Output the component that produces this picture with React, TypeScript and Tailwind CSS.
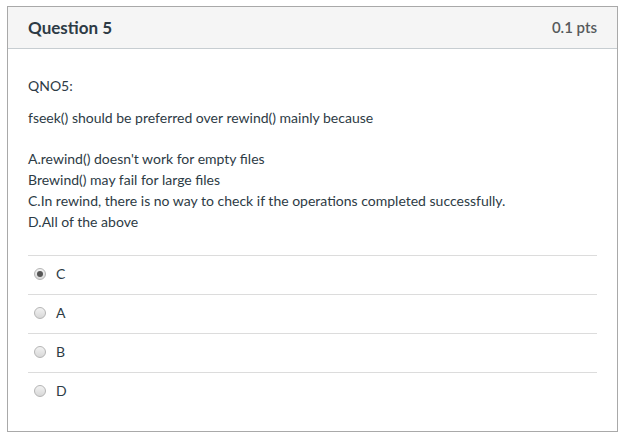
const options = [
  { label: 'C', checked: true },
  { label: 'A', checked: false },
  { label: 'B', checked: false },
  { label: 'D', checked: false },
];

const Radio = ({ checked }: { checked: boolean }) => (
  <span className="w-[12px] h-[12px] rounded-full border border-[#b5b5b5] bg-gradient-to-b from-[#f2f2f2] to-[#d8d8d8] flex items-center justify-center">
    {checked && <span className="w-[6px] h-[6px] rounded-full bg-[#555]"></span>}
  </span>
);

export default function App() {
  return (
    <div className="w-[623px] h-[437px] bg-white pt-[6px] pl-[7px]" style={{ fontFamily: 'Lato, "Open Sans", sans-serif' }}>
      <div className="w-[611px] h-[426px] border border-[#a9a9a9] text-[#2d3b45]">
        {/* Header */}
        <div className="h-[42px] bg-[#f5f5f5] border-b border-[#c7cdd1] flex items-center justify-between px-5">
          <h2 className="text-[17px] font-bold text-[#2d3b45] leading-none">Question 5</h2>
          <span className="text-[15px] font-semibold text-[#565a5c]">0.1 pts</span>
        </div>

        {/* Question text */}
        <div className="px-5 pt-[26px] text-[14px] leading-[21px]">
          <p>QNO5:</p>
          <p className="mt-[11px]">fseek() should be preferred over rewind() mainly because</p>
          <div className="mt-[20px]">
            <p>A.rewind() doesn't work for empty files</p>
            <p>Brewind() may fail for large files</p>
            <p>C.In rewind, there is no way to check if the operations completed successfully.</p>
            <p>D.All of the above</p>
          </div>

          {/* Answers */}
          <div className="mt-[23px]">
            {options.map((o) => (
              <div key={o.label} className="h-[39px] border-t border-[#dcdcdc] flex items-center pl-[6px] pb-[3px] gap-[10px]">
                <Radio checked={o.checked} />
                <span className="text-[14px]">{o.label}</span>
              </div>
            ))}
          </div>
        </div>
      </div>
    </div>
  );
}
